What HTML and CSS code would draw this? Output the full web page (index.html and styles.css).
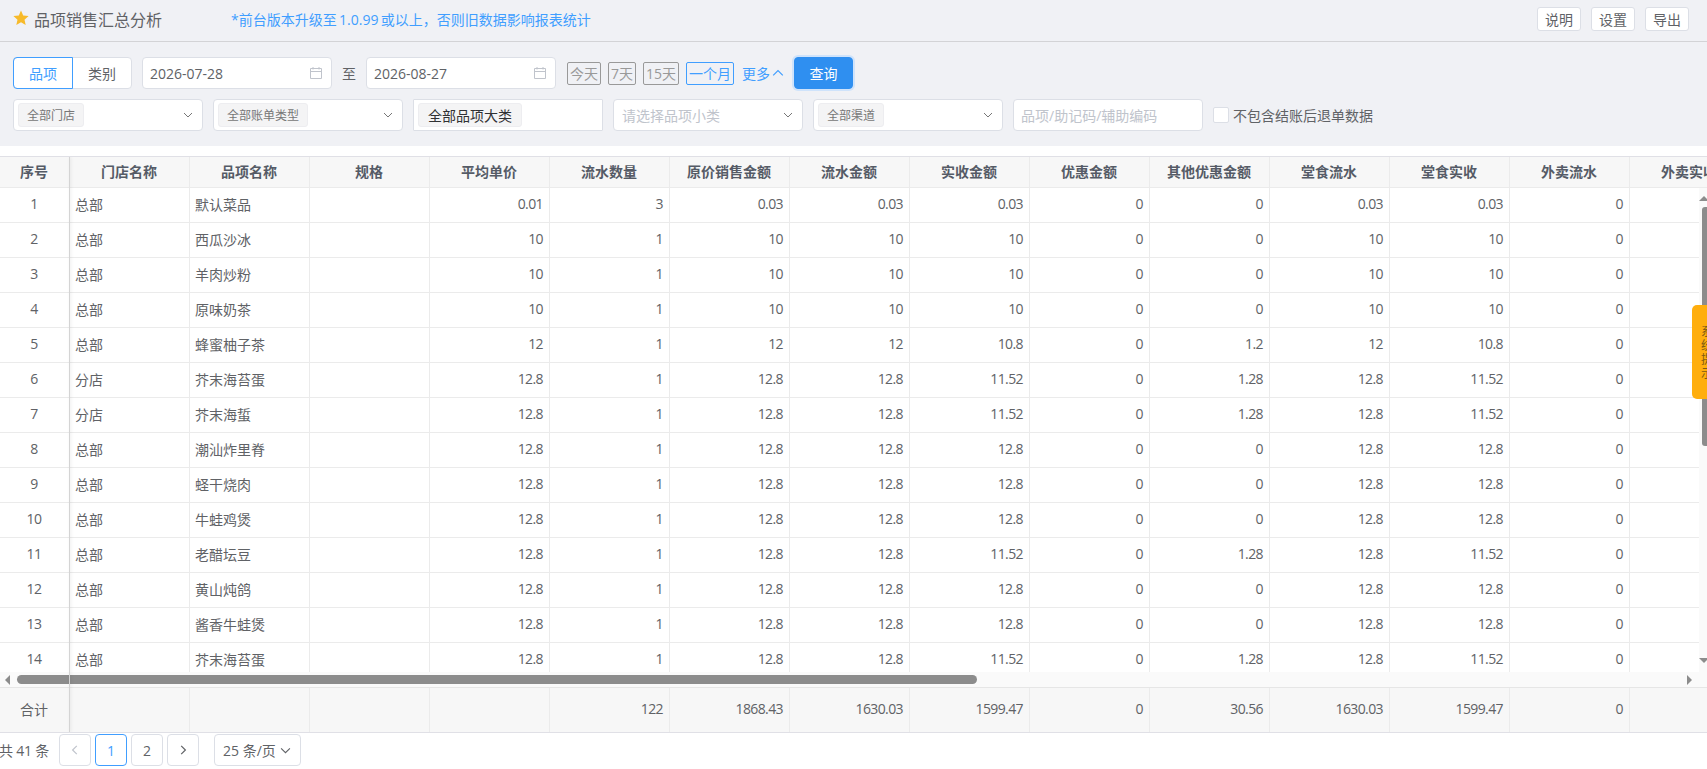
FILE: index.html
```html
<!DOCTYPE html>
<html lang="zh-CN">
<head>
    <meta charset="UTF-8">
    <title>品项销售汇总分析</title>
    <link rel="stylesheet" href="styles.css">
</head>
<body>
    <div class="topbar">
        <svg class="star" viewBox="0 0 16 16"><polygon points="8,0.6 10.2,5.6 15.6,6.1 11.5,9.7 12.7,15 8,12.2 3.3,15 4.5,9.7 0.4,6.1 5.8,5.6"/></svg>
        <span class="title">品项销售汇总分析</span>
        <span class="notice">*前台版本升级至 1.0.99 或以上，否则旧数据影响报表统计</span>
        <div class="top_btns">
            <button class="top_btn">说明</button>
            <button class="top_btn">设置</button>
            <button class="top_btn">导出</button>
        </div>
    </div>

    <div class="filters">
        <div class="filter_row">
            <div class="seg">
                <span class="seg_item seg_on">品项</span>
                <span class="seg_item">类别</span>
            </div>
            <div class="field date">
                <span>2026-07-28</span>
                <svg class="cal" viewBox="0 0 14 14"><path d="M1.5 2.5h11v10h-11zM1.5 5.5h11M4 1v2.5M10 1v2.5"/></svg>
            </div>
            <span class="to">至</span>
            <div class="field date">
                <span>2026-08-27</span>
                <svg class="cal" viewBox="0 0 14 14"><path d="M1.5 2.5h11v10h-11zM1.5 5.5h11M4 1v2.5M10 1v2.5"/></svg>
            </div>
            <div class="quick">
                <span class="quick_btn">今天</span>
                <span class="quick_btn">7天</span>
                <span class="quick_btn">15天</span>
                <span class="quick_btn quick_on">一个月</span>
            </div>
            <span class="more">更多<svg class="more_arrow" viewBox="0 0 10 10"><path d="M1 7l4-4 4 4"/></svg></span>
            <button class="search">查询</button>
        </div>
        <div class="filter_row row2">
            <div class="field sel"><span class="tag">全部门店</span><svg class="chev" viewBox="0 0 10 10"><path d="M1 3l4 4 4-4"/></svg></div>
            <div class="field sel"><span class="tag">全部账单类型</span><svg class="chev" viewBox="0 0 10 10"><path d="M1 3l4 4 4-4"/></svg></div>
            <div class="field sel sel_flat"><span class="tag tag_big">全部品项大类</span></div>
            <div class="field sel"><span class="hint hint_sel">请选择品项小类</span><svg class="chev" viewBox="0 0 10 10"><path d="M1 3l4 4 4-4"/></svg></div>
            <div class="field sel"><span class="tag">全部渠道</span><svg class="chev" viewBox="0 0 10 10"><path d="M1 3l4 4 4-4"/></svg></div>
            <div class="field sel"><span class="hint">品项/助记码/辅助编码</span></div>
            <label class="check"><span class="check_box"></span>不包含结账后退单数据</label>
        </div>
    </div>

    <div class="table_box">
        <table class="tbl tbl_head">
            <tr>
                <th>序号</th><th>门店名称</th><th>品项名称</th><th>规格</th><th>平均单价</th><th>流水数量</th><th>原价销售金额</th><th>流水金额</th><th>实收金额</th><th>优惠金额</th><th>其他优惠金额</th><th>堂食流水</th><th>堂食实收</th><th>外卖流水</th><th>外卖实收</th>
            </tr>
        </table>
        <div class="tbl_body">
            <table class="tbl">
                <tr><td>1</td><td>总部</td><td>默认菜品</td><td></td><td>0.01</td><td>3</td><td>0.03</td><td>0.03</td><td>0.03</td><td>0</td><td>0</td><td>0.03</td><td>0.03</td><td>0</td><td></td></tr>
                <tr><td>2</td><td>总部</td><td>西瓜沙冰</td><td></td><td>10</td><td>1</td><td>10</td><td>10</td><td>10</td><td>0</td><td>0</td><td>10</td><td>10</td><td>0</td><td></td></tr>
                <tr><td>3</td><td>总部</td><td>羊肉炒粉</td><td></td><td>10</td><td>1</td><td>10</td><td>10</td><td>10</td><td>0</td><td>0</td><td>10</td><td>10</td><td>0</td><td></td></tr>
                <tr><td>4</td><td>总部</td><td>原味奶茶</td><td></td><td>10</td><td>1</td><td>10</td><td>10</td><td>10</td><td>0</td><td>0</td><td>10</td><td>10</td><td>0</td><td></td></tr>
                <tr><td>5</td><td>总部</td><td>蜂蜜柚子茶</td><td></td><td>12</td><td>1</td><td>12</td><td>12</td><td>10.8</td><td>0</td><td>1.2</td><td>12</td><td>10.8</td><td>0</td><td></td></tr>
                <tr><td>6</td><td>分店</td><td>芥末海苔蛋</td><td></td><td>12.8</td><td>1</td><td>12.8</td><td>12.8</td><td>11.52</td><td>0</td><td>1.28</td><td>12.8</td><td>11.52</td><td>0</td><td></td></tr>
                <tr><td>7</td><td>分店</td><td>芥末海蜇</td><td></td><td>12.8</td><td>1</td><td>12.8</td><td>12.8</td><td>11.52</td><td>0</td><td>1.28</td><td>12.8</td><td>11.52</td><td>0</td><td></td></tr>
                <tr><td>8</td><td>总部</td><td>潮汕炸里脊</td><td></td><td>12.8</td><td>1</td><td>12.8</td><td>12.8</td><td>12.8</td><td>0</td><td>0</td><td>12.8</td><td>12.8</td><td>0</td><td></td></tr>
                <tr><td>9</td><td>总部</td><td>蛏干烧肉</td><td></td><td>12.8</td><td>1</td><td>12.8</td><td>12.8</td><td>12.8</td><td>0</td><td>0</td><td>12.8</td><td>12.8</td><td>0</td><td></td></tr>
                <tr><td>10</td><td>总部</td><td>牛蛙鸡煲</td><td></td><td>12.8</td><td>1</td><td>12.8</td><td>12.8</td><td>12.8</td><td>0</td><td>0</td><td>12.8</td><td>12.8</td><td>0</td><td></td></tr>
                <tr><td>11</td><td>总部</td><td>老醋坛豆</td><td></td><td>12.8</td><td>1</td><td>12.8</td><td>12.8</td><td>11.52</td><td>0</td><td>1.28</td><td>12.8</td><td>11.52</td><td>0</td><td></td></tr>
                <tr><td>12</td><td>总部</td><td>黄山炖鸽</td><td></td><td>12.8</td><td>1</td><td>12.8</td><td>12.8</td><td>12.8</td><td>0</td><td>0</td><td>12.8</td><td>12.8</td><td>0</td><td></td></tr>
                <tr><td>13</td><td>总部</td><td>酱香牛蛙煲</td><td></td><td>12.8</td><td>1</td><td>12.8</td><td>12.8</td><td>12.8</td><td>0</td><td>0</td><td>12.8</td><td>12.8</td><td>0</td><td></td></tr>
                <tr><td>14</td><td>总部</td><td>芥末海苔蛋</td><td></td><td>12.8</td><td>1</td><td>12.8</td><td>12.8</td><td>11.52</td><td>0</td><td>1.28</td><td>12.8</td><td>11.52</td><td>0</td><td></td></tr>
            </table>
            <div class="vbar">
                <span class="vbar_up"></span>
                <span class="vbar_thumb"></span>
                <span class="vbar_down"></span>
            </div>
        </div>
        <div class="hbar">
            <span class="hbar_left"></span>
            <span class="hbar_thumb"></span>
            <span class="hbar_right"></span>
        </div>
        <table class="tbl tbl_foot">
            <tr><td>合计</td><td></td><td></td><td></td><td></td><td>122</td><td>1868.43</td><td>1630.03</td><td>1599.47</td><td>0</td><td>30.56</td><td>1630.03</td><td>1599.47</td><td>0</td><td></td></tr>
        </table>
        <div class="fixed_edge"></div>
    </div>

    <div class="pager">
        <span class="total">共 41 条</span>
        <span class="page_btn page_off"><svg viewBox="0 0 10 10"><path d="M6.5 1.5L3 5l3.500 3.500"/></svg></span>
        <span class="page_btn page_on">1</span>
        <span class="page_btn">2</span>
        <span class="page_btn"><svg viewBox="0 0 10 10"><path d="M3.500 1.500L7 5 3.500 8.500"/></svg></span>
        <span class="page_size">25 条/页<svg viewBox="0 0 10 10"><path d="M1 3l4 4 4-4"/></svg></span>
    </div>

    <div class="tip">系统提示</div>
</body>
</html>
```

FILE: styles.css
```css
*{
    box-sizing: border-box;
    margin: 0;
    padding: 0;
}
html,body{
    height: 769px;
    overflow: hidden;
}
body{
    font-family: "Open Sans", "Noto Sans CJK SC", sans-serif;
    font-size: 14px;
    color: #606266;
    background-color: #fff;
}
svg{
    display: block;
    fill: none;
    stroke: currentColor;
}

/* top bar */
.topbar{
    display: flex;
    align-items: center;
    height: 42px;
    padding: 0 18px 4px 13px;
    background-color: #f0f1f5;
    border-bottom: 1px solid #d3d3d6;
}
.star{
    width: 16px;
    height: 16px;
    margin-top: -1px;
    fill: #f7ba2a;
    stroke: none;
}
.title{
    margin-left: 5px;
    font-size: 16px;
    color: #606266;
}
.notice{
    margin-left: 69px;
    font-size: 14px;
    word-spacing: -1.300px;
    color: #409eff;
}
.top_btns{
    display: flex;
    gap: 10px;
    margin-left: auto;
}
.top_btn{
    width: 44px;
    height: 24px;
    font-family: inherit;
    font-size: 14px;
    color: #606266;
    background-color: #fff;
    border: 1px solid #dcdfe6;
    border-radius: 3px;
}

/* filters */
.filters{
    height: 104px;
    padding: 15px 0 0 13px;
    background-color: #f0f1f5;
}
.filter_row{
    display: flex;
    align-items: center;
    height: 32px;
}
.row2{
    margin-top: 10px;
    gap: 10px;
}
.seg{
    display: flex;
    width: 119px;
    height: 32px;
    margin-right: 10px;
    background-color: #fff;
    border: 1px solid #dcdfe6;
    border-radius: 4px;
}
.seg_item{
    display: flex;
    justify-content: center;
    align-items: center;
    flex: 1;
}
.seg_on{
    flex: 0 0 60px;
    margin: -1px 0 -1px -1px;
    color: #409eff;
    border: 1px solid #409eff;
    border-radius: 4px 0 0 4px;
}
.field{
    display: flex;
    align-items: center;
    width: 190px;
    height: 32px;
    background-color: #fff;
    border: 1px solid #dcdfe6;
    border-radius: 4px;
}
.date{
    justify-content: space-between;
    padding: 0 8px 0 7px;
}
.cal{
    width: 14px;
    height: 14px;
    color: #c0c4cc;
}
.to{
    width: 34px;
    text-align: center;
}
.quick{
    display: flex;
    gap: 7px;
    margin-left: 11px;
}
.quick_btn{
    display: flex;
    justify-content: center;
    align-items: center;
    height: 23px;
    padding: 0 2px;
    color: #999;
    border: 1px solid #999;
    border-radius: 2px;
}
.quick_on{
    color: #409eff;
    border-color: #409eff;
}
.more{
    display: flex;
    align-items: center;
    gap: 2px;
    margin-left: 8px;
    color: #409eff;
}
.more_arrow{
    width: 12px;
    height: 12px;
}
.search{
    width: 59px;
    height: 32px;
    margin-left: 10px;
    font-family: inherit;
    font-size: 14px;
    color: #fff;
    background-color: #2f8ff0;
    border: 1px solid #2f8ff0;
    border-radius: 4px;
    box-shadow: 0 0 0 2px #cfe3fb;
}
.sel{
    justify-content: space-between;
    padding: 0 9px 0 4px;
}
.sel_flat{
    border-radius: 1px;
}
.tag{
    display: flex;
    align-items: center;
    height: 24px;
    padding: 0 8px;
    font-size: 12px;
    color: #777;
    background-color: #f4f4f5;
    border: 1px solid #ededf0;
    border-radius: 3px;
}
.tag_big{
    padding: 0 9px;
    font-size: 14px;
    color: #303133;
}
.hint{
    padding-left: 3px;
    color: #c0c4cc;
}
.hint_sel{
    padding-left: 4px;
}
.chev{
    width: 10px;
    height: 10px;
    color: #777;
}
.check{
    display: flex;
    align-items: center;
    gap: 4px;
    font-size: 14px;
}
.check_box{
    width: 16px;
    height: 16px;
    background-color: #fff;
    border: 1px solid #dcdfe6;
    border-radius: 2px;
}

/* table */
.table_box{
    position: relative;
    height: 577px;
    margin-top: 10px;
    overflow: hidden;
    border-top: 1px solid #e0e0e6;
    border-bottom: 1px solid #e0e0e6;
}
.tbl{
    width: 1750px;
    table-layout: fixed;
    border-collapse: separate;
    border-spacing: 0;
}
.tbl th,.tbl td{
    width: 120px;
    padding: 0 6px 3px 5px;
    border-right: 1px solid #ebebeb;
    border-bottom: 1px solid #ebebeb;
    overflow: hidden;
    white-space: nowrap;
}
.tbl th:first-child,.tbl td:first-child{
    width: 70px;
    text-align: center;
}
.tbl th{
    height: 31px;
    font-weight: bold;
    color: #555b66;
    background-color: #f7f7f7;
}
.tbl td{
    height: 35px;
    text-align: right;
    letter-spacing: -0.600px;
}
.tbl td:nth-child(2),.tbl td:nth-child(3){
    text-align: left;
    letter-spacing: 0;
}
.tbl_body{
    position: relative;
    height: 484px;
    overflow: hidden;
}
.tbl_foot td{
    height: 44px;
    background-color: #f7f7f7;
    border-bottom: none;
}
.tbl_foot td:first-child{
    letter-spacing: 0;
}
.fixed_edge{
    position: absolute;
    top: 0;
    bottom: 0;
    left: 69px;
    width: 1px;
    background-color: #d4d4d4;
    box-shadow: 1px 0 3px rgba(0,0,0,0.12);
}

/* scroll bars */
.vbar{
    position: absolute;
    top: 0;
    right: 0;
    bottom: 0;
    width: 8px;
    background-color: #fafafa;
}
.vbar_thumb{
    position: absolute;
    top: 19px;
    right: 0;
    width: 5px;
    height: 239px;
    background-color: #8c8c8c;
    border-radius: 3px 0 0 3px;
}
.vbar_up{
    position: absolute;
    top: 8px;
    right: -2px;
    border-left: 5px solid transparent;
    border-right: 5px solid transparent;
    border-bottom: 5px solid #8c8c8c;
}
.vbar_down{
    position: absolute;
    bottom: 9px;
    right: -2px;
    border-left: 5px solid transparent;
    border-right: 5px solid transparent;
    border-top: 5px solid #8c8c8c;
}
.hbar{
    display: flex;
    align-items: center;
    height: 16px;
    background-color: #fafafa;
    border-bottom: 1px solid #e6e6e6;
}
.hbar_left{
    margin-left: 5px;
    border-top: 5px solid transparent;
    border-bottom: 5px solid transparent;
    border-right: 5px solid #8c8c8c;
}
.hbar_thumb{
    width: 960px;
    height: 9px;
    margin-left: 7px;
    background-color: #8c8c8c;
    border-radius: 5px;
}
.hbar_right{
    margin-left: auto;
    margin-right: 15px;
    border-top: 5px solid transparent;
    border-bottom: 5px solid transparent;
    border-left: 5px solid #8c8c8c;
}

/* pager */
.pager{
    display: flex;
    align-items: center;
    height: 32px;
    margin-top: 1px;
}
.total{
    width: 59px;
    margin-left: -1px;
    margin-right: 1px;
    letter-spacing: -0.200px;
    white-space: nowrap;
}
.page_btn{
    display: flex;
    justify-content: center;
    align-items: center;
    width: 32px;
    height: 32px;
    margin-right: 4px;
    border: 1px solid #dcdfe6;
    border-radius: 4px;
}
.page_btn svg{
    width: 12px;
    height: 12px;
}
.page_off{
    color: #c0c4cc;
}
.page_on{
    color: #409eff;
    border-color: #409eff;
}
.page_size{
    display: flex;
    align-items: center;
    gap: 4px;
    height: 32px;
    margin-left: 11px;
    padding: 0 9px 0 8px;
    border: 1px solid #dcdfe6;
    border-radius: 4px;
}
.page_size svg{
    width: 11px;
    height: 11px;
}

.tip{
    position: fixed;
    top: 305px;
    left: 1692px;
    width: 40px;
    height: 94px;
    padding: 20px 19px 0 9px;
    font-size: 12px;
    line-height: 14px;
    color: #7d5a12;
    background-color: #ffae0d;
    border-radius: 5px;
    word-break: break-all;
    overflow: hidden;
}
```
